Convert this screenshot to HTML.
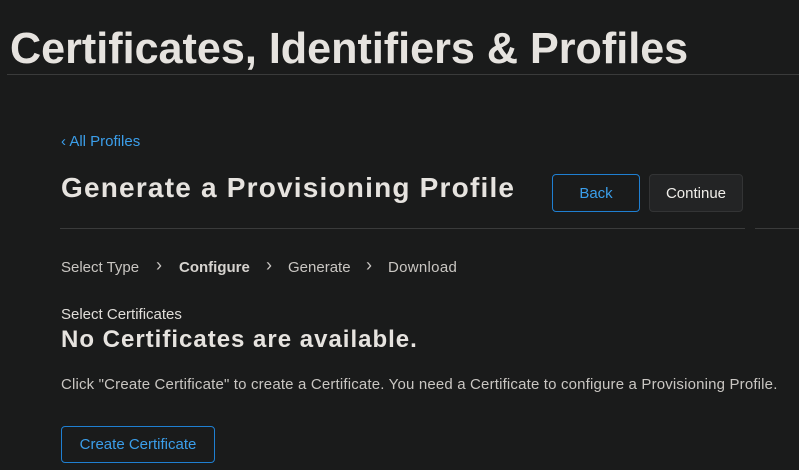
<!DOCTYPE html>
<html><head><meta charset="utf-8"><style>
html,body{margin:0;padding:0;background:#1a1b1b;width:799px;height:470px;overflow:hidden;font-family:"Liberation Sans",sans-serif;color:#e6e3df}
.a{position:absolute;white-space:nowrap}
.h1{left:10px;top:24px;font-size:44px;font-weight:bold;transform:scaleX(0.98);transform-origin:left top}
.line{position:absolute;height:1px;background:#3a3b3b}
.btn{position:absolute;box-sizing:border-box;border-radius:4px;font-size:15px;display:flex;align-items:center;justify-content:center}
</style></head><body>
<div class="a h1">Certificates, Identifiers &amp; Profiles</div>
<div class="line" style="left:7px;top:74px;width:792px"></div>
<div class="a" style="left:61px;top:133px;font-size:15px;color:#3b9eea">‹ All Profiles</div>
<div class="a" style="left:61px;top:172px;font-size:28px;font-weight:bold;letter-spacing:1.2px">Generate a Provisioning Profile</div>
<div class="btn" style="left:552px;top:174px;width:88px;height:38px;border:1px solid #1f7fd1;color:#3b9eea">Back</div>
<div class="btn" style="left:649px;top:174px;width:94px;height:38px;border:1px solid #333435;background:#232425;color:#f0eeea">Continue</div>
<div class="line" style="left:60px;top:228px;width:685px"></div>
<div class="line" style="left:755px;top:228px;width:44px"></div>
<div class="a" style="left:61px;top:259px;font-size:15px;color:#c9c6c2">Select Type</div>
<div class="a" style="left:156px;top:255px;font-size:18px;color:#c9c6c2">›</div>
<div class="a" style="left:179px;top:259px;font-size:15px;font-weight:bold;color:#d6d3cf">Configure</div>
<div class="a" style="left:266px;top:255px;font-size:18px;color:#c9c6c2">›</div>
<div class="a" style="left:288px;top:259px;font-size:15px;color:#c9c6c2">Generate</div>
<div class="a" style="left:366px;top:255px;font-size:18px;color:#c9c6c2">›</div>
<div class="a" style="left:388px;top:259px;font-size:15px;color:#c9c6c2;letter-spacing:0.3px">Download</div>
<div class="a" style="left:61px;top:306px;font-size:15px;color:#e0ddd9">Select Certificates</div>
<div class="a" style="left:61px;top:326px;font-size:24px;font-weight:bold;letter-spacing:1px">No Certificates are available.</div>
<div class="a" style="left:61px;top:376px;font-size:15px;color:#c9c6c2;letter-spacing:0.17px">Click "Create Certificate" to create a Certificate. You need a Certificate to configure a Provisioning Profile.</div>
<div class="btn" style="left:61px;top:426px;width:154px;height:37px;border:1px solid #1f7fd1;color:#3b9eea">Create Certificate</div>
</body></html>
